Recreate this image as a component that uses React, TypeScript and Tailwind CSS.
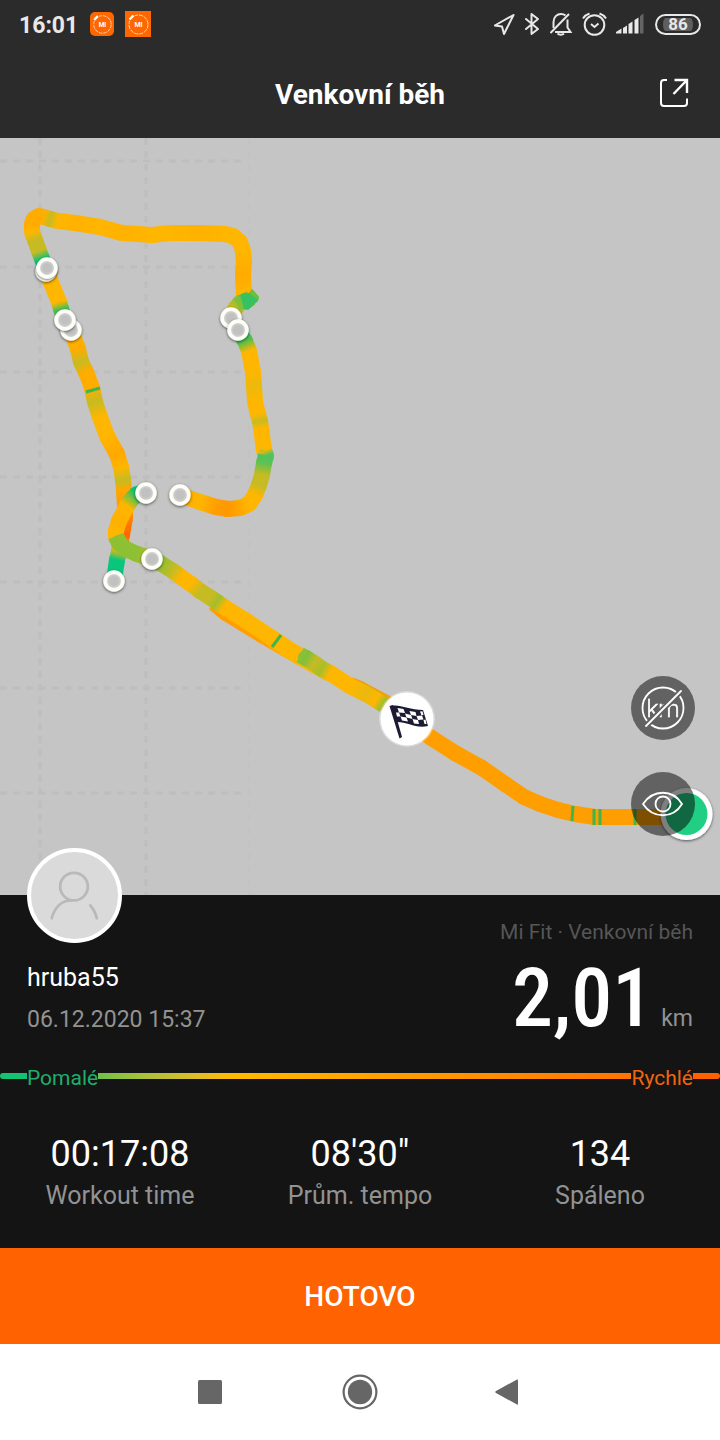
import React from 'react';

type Point = [number, number, string];

const AMBER = '#ffb600';
const ORANGE = '#ff9e00';
const OLIVE = '#c6bb22';
const LIME = '#8ec034';
const GREEN = '#12c374';

// Each track is a list of points with the speed colour at that point
const tracks: Point[][] = [
  // finish straight
  [[395, 712, ORANGE], [430, 737, ORANGE], [455, 753, ORANGE], [482, 768, ORANGE], [505, 784, ORANGE], [524, 797, ORANGE], [540, 804, ORANGE], [558, 810, ORANGE], [575, 814, ORANGE], [595, 817, ORANGE], [690, 817, ORANGE]],
  // shadow passes under the main diagonal
  [[214, 603, ORANGE], [226, 613, ORANGE], [262, 635, ORANGE], [298, 656, AMBER], [330, 674, AMBER]],
  [[350, 685, '#f0a00a'], [360, 689, '#f0a00a'], [390, 705, '#f0a00a']],
  // left side, top loop
  [[46, 268, GREEN], [42, 259, GREEN], [39, 251, OLIVE], [35, 240, OLIVE], [32, 232, AMBER], [32, 224, '#ffab00'], [34, 219, '#ffab00'], [39, 216, '#ffab00'], [44, 217, '#ffb000'], [50, 219, OLIVE], [58, 221, AMBER], [75, 223, '#ffb200'], [100, 227, AMBER], [122, 233, '#ffb200'], [152, 235, AMBER], [170, 233, AMBER], [200, 233, '#ffb200'], [225, 234, AMBER], [233, 236, AMBER], [240, 242, AMBER], [243, 251, AMBER], [244, 262, '#ffb000'], [243, 275, '#ffab00'], [244, 297, AMBER]],
  [[251, 298, LIME], [246, 301, '#38c160'], [240, 303, LIME], [235, 309, OLIVE], [231, 318, AMBER]],
  [[46, 268, AMBER], [50, 280, AMBER], [59, 302, AMBER], [61, 309, '#4cc050'], [65, 320, GREEN]],
  // left side going down
  [[71, 330, AMBER], [78, 349, '#ffac00'], [81, 362, OLIVE], [86, 372, '#ffac00'], [92, 388, '#ffac00'], [95, 402, OLIVE], [100, 417, AMBER], [107, 436, AMBER], [117, 454, '#ffa800'], [121, 467, AMBER], [123, 480, OLIVE], [124, 490, '#ffa800'], [125, 507, '#ff9a00'], [125, 518, '#ff8200'], [122, 535, '#ff6600'], [120, 545, '#ff9a00'], [119, 552, OLIVE], [117, 560, '#0ac67c'], [114, 580, '#0ac67c']],
  // junction and the long diagonal
  [[145, 493, GREEN], [137, 494, GREEN], [131, 500, LIME], [127, 506, AMBER], [119, 521, '#ffb000'], [116, 531, AMBER], [116, 536, AMBER], [117, 540, LIME]],
  [[116, 536, LIME], [119, 543, LIME], [126, 549, LIME], [137, 554, LIME], [150, 558, OLIVE], [160, 563, LIME], [173, 571, OLIVE], [181, 577, AMBER], [191, 584, AMBER], [200, 591, OLIVE], [211, 598, OLIVE], [217, 602, '#a3be2c'], [224, 607, AMBER], [245, 620, AMBER], [272, 638, AMBER], [290, 650, AMBER], [299, 655, AMBER]],
  [[300, 655, LIME], [306, 658, '#80c03a'], [314, 663, OLIVE], [322, 669, '#a8be2a'], [330, 673, AMBER], [350, 686, AMBER], [366, 694, '#eab90e'], [376, 700, AMBER], [384, 705, LIME]],
  // right side
  [[238, 330, GREEN], [245, 341, '#52c04c'], [249, 351, AMBER], [253, 372, AMBER], [254, 385, '#ecb90c'], [255, 402, AMBER], [258, 414, AMBER], [260, 421, OLIVE], [261, 428, AMBER], [264, 450, AMBER], [266, 456, '#4cc35c'], [264, 463, '#5ec252'], [262, 475, OLIVE], [259, 485, OLIVE], [255, 495, AMBER], [249, 504, AMBER], [240, 508, '#ffa800'], [228, 509, '#ff9800'], [216, 507, ORANGE], [200, 502, AMBER], [180, 495, '#ffaa00']],
];

// Short slow spots drawn across the track
const ticks = [
  [86, 392, 100, 388],
  [272, 647, 281, 635],
  [572, 821, 573, 806],
  [594, 825, 594, 809],
  [600, 825, 600, 809],
  [635, 825, 635, 809],
];

const markers = [
  [46, 271], [47, 268], [71, 330], [65, 320], [231, 318], [238, 330],
  [146, 493], [180, 495], [152, 559], [114, 581],
];

const stats = [
  { value: '00:17:08', label: 'Workout time' },
  { value: "08'30\"", label: 'Prům. tempo' },
  { value: '134', label: 'Spáleno' },
];

function Track({ points, id }: { points: Point[]; id: string }) {
  return (
    <g>
      {points.slice(1, -1).map(([x, y, c], i) => (
        <circle key={i} cx={x} cy={y} r="8" fill={c} />
      ))}
      {points.slice(1).map(([x, y, c], i) => {
        const [px, py, pc] = points[i];
        return (
          <g key={i}>
            <linearGradient id={`${id}-${i}`} gradientUnits="userSpaceOnUse" x1={px} y1={py} x2={x} y2={y}>
              <stop offset="0" stopColor={pc} />
              <stop offset="1" stopColor={c} />
            </linearGradient>
            <path d={`M${px} ${py}L${x} ${y}`} stroke={`url(#${id}-${i})`} strokeWidth="16" />
          </g>
        );
      })}
    </g>
  );
}

function RouteMap() {
  return (
    <svg viewBox="0 138 720 757" className="block w-full h-auto bg-[#c4c5c4]" role="img" aria-label="Venkovní běh">
      <defs>
        <filter id="soft" x="-30%" y="-30%" width="160%" height="160%">
          <feDropShadow dx="0" dy="1" stdDeviation="1.4" floodOpacity="0.6" />
        </filter>
        <radialGradient id="hole">
          <stop offset="0.6" stopColor="#c2c1c2" />
          <stop offset="1" stopColor="#d4d4d0" />
        </radialGradient>
      </defs>
      <g stroke="#bebec0" strokeWidth="3" strokeDasharray="7 6">
        {[161, 267, 372, 477, 582, 688, 793].map(y => (
          <path key={y} d={`M0 ${y}H246`} />
        ))}
        {[40, 146].map(x => (
          <path key={x} d={`M${x} 138V895`} />
        ))}
        <path d="M249 138V895" strokeWidth="1" opacity="0.6" />
      </g>
      {tracks.slice(0, 4).map((t, i) => (
        <Track key={i} id={`a${i}`} points={t} />
      ))}
      {tracks.slice(4).map((t, i) => (
        <Track key={i} id={`b${i}`} points={t} />
      ))}
      {/* turn-back spike */}
      <path d="M238 296L244 293L250 293L252 289L259 297L258 301L248 310L241 308Z" fill="#38c160" />
      <path d="M249 293L252 289L259 297L258 300Z" fill="#6fbe3c" />
      <path d="M235 300L240 295L244 308L240 310Z" fill="#7cc03c" />
      <g stroke="#3fb54a" strokeWidth="3">
        {ticks.map(([x1, y1, x2, y2]) => (
          <path key={x1} d={`M${x1} ${y1}L${x2} ${y2}`} />
        ))}
      </g>
      {markers.map(([x, y]) => (
        <g key={`${x}-${y}`}>
          <circle cx={x} cy={y} r="10.7" fill="#fdfef7" filter="url(#soft)" />
          <circle cx={x} cy={y} r="7" fill="url(#hole)" />
        </g>
      ))}
      {/* start */}
      <g filter="url(#soft)">
        <circle cx="686.5" cy="814" r="26" fill="#fff" />
      </g>
      <circle cx="686.5" cy="814" r="21" fill="#20cf83" />
      {/* finish flag */}
      <circle cx="407" cy="719" r="28" fill="#fff" opacity="0.35" />
      <circle cx="407" cy="719" r="26.5" fill="#fff" />
      <g fill="#1c1b33">
        <path d="M389.500 706L393 705L402 737L399.500 738.500Z" />
        <path d="M391 706C400 704 409 710 423 710L428 726C416 729 408 722 397 722Z" />
      </g>
      <g fill="#fff">
        <path d="M397.500 708L403.500 709L405 713L399 712.500Z" />
        <path d="M409.500 711L415.500 712L416.500 716L411 715Z" />
        <path d="M405 713.500L411 715L412.500 719L406.500 717.500Z" />
        <path d="M416.500 716L422 715.500L423.500 719.500L418 720Z" />
        <path d="M396 712.500L399 712.500L400.500 716.500L397 716.500Z" />
        <path d="M400.500 716.500L406.500 717.500L408 721.500L402 720.500Z" />
        <path d="M412.500 719L418 720L419 724L414 723.500Z" />
        <path d="M423.500 720L425.500 719.500L426.500 724L424.500 724Z" />
        <path d="M420 711.500L422.500 711.300L423.500 715L421.500 715.300Z" />
      </g>
    </svg>
  );
}

function MiBadge({ className }: { className: string }) {
  return (
    <svg viewBox="0 0 26 26" className={className} aria-hidden="true">
      <circle cx="13.500" cy="13.500" r="9.500" fill="none" stroke="#ffd9b8" strokeWidth="1" strokeDasharray="4 1" />
      <path d="M4 9L9 4" stroke="#ff6700" strokeWidth="5" />
      <path d="M4.500 8.500L8.500 4.500" stroke="#fff" strokeWidth="2.400" />
      <text x="13.500" y="16" textAnchor="middle" fontSize="7" fontWeight="700" fill="#fff">MI</text>
    </svg>
  );
}

function StatusBar() {
  return (
    <div className="flex h-12 items-center justify-between px-[19px] text-[#e8e8e8]">
      <div className="flex items-center">
        <span className="pt-1 text-[23px] leading-8 font-bold">16:01</span>
        <MiBadge className="ml-3 size-6 rounded-[5px] bg-[#ff6700]" />
        <MiBadge className="ml-[11px] size-[26px] bg-[#ff6700]" />
      </div>
      <div className="flex items-center gap-1">
        <svg viewBox="0 0 24 24" className="size-6" fill="none" stroke="currentColor" strokeWidth="2" strokeLinejoin="round">
          <path d="M19.500 3L.8 13.500L8 14.500L10 22Z" />
        </svg>
        <svg viewBox="0 0 24 24" className="size-6" fill="none" stroke="currentColor" strokeWidth="2" strokeLinejoin="round" strokeLinecap="round">
          <path d="M4 7L16 17L9.500 22V2L16 7L4 17" />
        </svg>
        <svg viewBox="0 0 24 24" className="size-6" fill="none" stroke="currentColor" strokeWidth="2">
          <path d="M.5 21L19 2" />
          <path d="M3.500 16V10C3.500 5 7 2 11 2C13 2 14.500 2.600 15.500 3.500M17.500 7.500V15.500L20.500 20H5" />
          <path d="M7.500 21.500C9 23 12.500 23 14 21.500" strokeWidth="2" />
        </svg>
        <svg viewBox="0 0 34 24" className="h-6 w-[34px]" fill="none" stroke="currentColor" strokeWidth="2">
          <circle cx="16.500" cy="13" r="9.800" />
          <path d="M5 6.500C6.500 4 8.500 2.500 11.500 1.500M21.500 1.500C24.500 2.500 26.500 4 28 6.500" />
          <path d="M13 12L16.500 15L20.500 11.500" />
        </svg>
        <svg viewBox="0 0 28 24" className="h-6 w-7" fill="currentColor">
          <path d="M0 21.500V20L5.500 16.500V21.500Z" />
          <path d="M7 16L11 13.500V21.500H7Z" />
          <path d="M12.500 12L16.500 9.500V21.500H12.500Z" />
          <path d="M18.500 8L22.500 5.500V21.500H18.500Z" />
          <path d="M24 4L27.500 1.500V21.500H24Z" opacity="0.3" />
        </svg>
        <div className="ml-[7px] flex h-[21px] w-[46px] items-center justify-center rounded-full border-2 border-current bg-[#5e5e5e] bg-clip-content px-1.5 py-0.5 text-[17px] leading-4 font-bold">
          86
        </div>
      </div>
    </div>
  );
}

function KmOffIcon() {
  return (
    <svg viewBox="0 0 64 64" className="size-16" fill="none" stroke="#fff" strokeWidth="1.800" strokeLinecap="round">
      <mask id="slash">
        <rect width="64" height="64" fill="#fff" stroke="none" />
        <path d="M13 52L52 13" stroke="#000" strokeWidth="6" />
      </mask>
      <g mask="url(#slash)">
        <circle cx="32" cy="32" r="20.500" />
        <text x="32" y="41" textAnchor="middle" fontSize="24" fontWeight="300" fill="#fff" strokeWidth="0.500">km</text>
      </g>
      <path d="M15 50L50 15" />
    </svg>
  );
}

export default function App() {
  return (
    <div className="w-full bg-white font-['Roboto',sans-serif]">
      <header className="bg-[#2b2b2b] text-white">
        <StatusBar />
        <div className="grid h-[90px] grid-cols-[1fr_auto_1fr] items-center px-[30px]">
          <h1 className="col-start-2 pt-1 text-[28px] leading-9 font-bold">Venkovní běh</h1>
          <button type="button" aria-label="Sdílet" className="justify-self-end">
            <svg viewBox="0 0 32 32" className="size-8" fill="none" stroke="currentColor" strokeWidth="2">
              <path d="M9 3H6Q3 3 3 6V26Q3 29 6 29H26Q29 29 29 26V21.500" />
              <path d="M16.500 3H29V16M29 3L15.500 17" strokeWidth="2.400" />
            </svg>
          </button>
        </div>
      </header>

      <main>
        <div className="relative">
          <RouteMap />
          <div className="absolute right-[25px] bottom-[59px] flex flex-col gap-8">
            <button type="button" aria-label="Skrýt kilometry" className="size-16 rounded-full bg-black/50">
              <KmOffIcon />
            </button>
            <button type="button" aria-label="Zobrazení mapy" className="size-16 rounded-full bg-black/50">
              <svg viewBox="0 0 64 64" className="size-16" fill="none" stroke="#fff" strokeWidth="1.800">
                <path d="M12 32C22 17 42 17 51 32C42 47 22 47 12 32Z" strokeLinejoin="round" />
                <circle cx="32" cy="32" r="7.500" />
              </svg>
            </button>
          </div>
        </div>

        <section className="bg-[#141414] text-white">
          <div className="flex justify-between px-[27px]">
            <div className="relative -mt-[47px]">
              <div className="size-[95px] rounded-full border-4 border-white bg-[#dadada]">
                <svg viewBox="0 0 88 88" className="size-full" fill="none" stroke="#b9b9b9" strokeWidth="2.800" strokeLinecap="round">
                  <circle cx="43.500" cy="35" r="14" />
                  <path d="M21 67C24 56 31 49 41 49M60 54Q65 60 66.500 67" />
                </svg>
              </div>
              <p className="mt-[17px] text-[25px] leading-9">hruba55</p>
              <p className="mt-2 text-[23px] leading-8 text-[#929292]">06.12.2020 15:37</p>
            </div>
            <div className="flex flex-col items-end pt-[21px]">
              <p className="text-[21px] leading-8 text-[#565656]">Mi Fit · Venkovní běh</p>
              <p className="mt-3 flex items-baseline gap-2">
                <span className="font-['Roboto_Condensed','Roboto',sans-serif] text-[82px] leading-[76px] font-medium">2,01</span>
                <span className="text-[23px] leading-8 text-[#929292]">km</span>
              </p>
            </div>
          </div>

          {/* Speed scale */}
          <div className="mt-6 flex items-center text-[21px] leading-7">
            <div className="h-1.5 w-[27px] rounded-l-full bg-[#12c374]" />
            <span className="pt-1 text-[#1fae6c]">Pomalé</span>
            <div className="h-1.5 flex-1 bg-linear-to-r from-[#6fc048] via-[#ffba00] via-25% to-[#ff7300]" />
            <span className="pt-1 text-[#f0650f]">Rychlé</span>
            <div className="h-1.5 w-[27px] rounded-r-full bg-[#ff6000]" />
          </div>

          <div className="grid grid-cols-3 pt-[42px] pb-[34px] text-center">
            {stats.map(s => (
              <div key={s.label}>
                <p className="text-[36px] leading-10">{s.value}</p>
                <p className="mt-1 text-[25px] leading-9 text-[#929292]">{s.label}</p>
              </div>
            ))}
          </div>
        </section>

        <button type="button" className="h-24 w-full bg-[#ff6200] pt-0.5 text-[28px] leading-9 font-medium text-white">
          HOTOVO
        </button>
      </main>

      <nav className="flex h-24 items-center justify-center gap-[116px] text-[#666]">
        <button type="button" aria-label="Poslední aplikace">
          <svg viewBox="0 0 36 36" className="size-9" fill="currentColor">
            <rect x="8" y="6" width="24" height="24" rx="1.500" />
          </svg>
        </button>
        <button type="button" aria-label="Domů">
          <svg viewBox="0 0 36 36" className="size-9" fill="currentColor">
            <circle cx="18" cy="18" r="16.400" fill="none" stroke="currentColor" strokeWidth="2.200" />
            <circle cx="18" cy="18" r="12.200" />
          </svg>
        </button>
        <button type="button" aria-label="Zpět">
          <svg viewBox="0 0 36 36" className="size-9" fill="currentColor">
            <path d="M24 6.500V30Q24 31 23 30.500L2 19Q.5 18 2 17L23 5.500Q24 5 24 6.500Z" />
          </svg>
        </button>
      </nav>
    </div>
  );
}
